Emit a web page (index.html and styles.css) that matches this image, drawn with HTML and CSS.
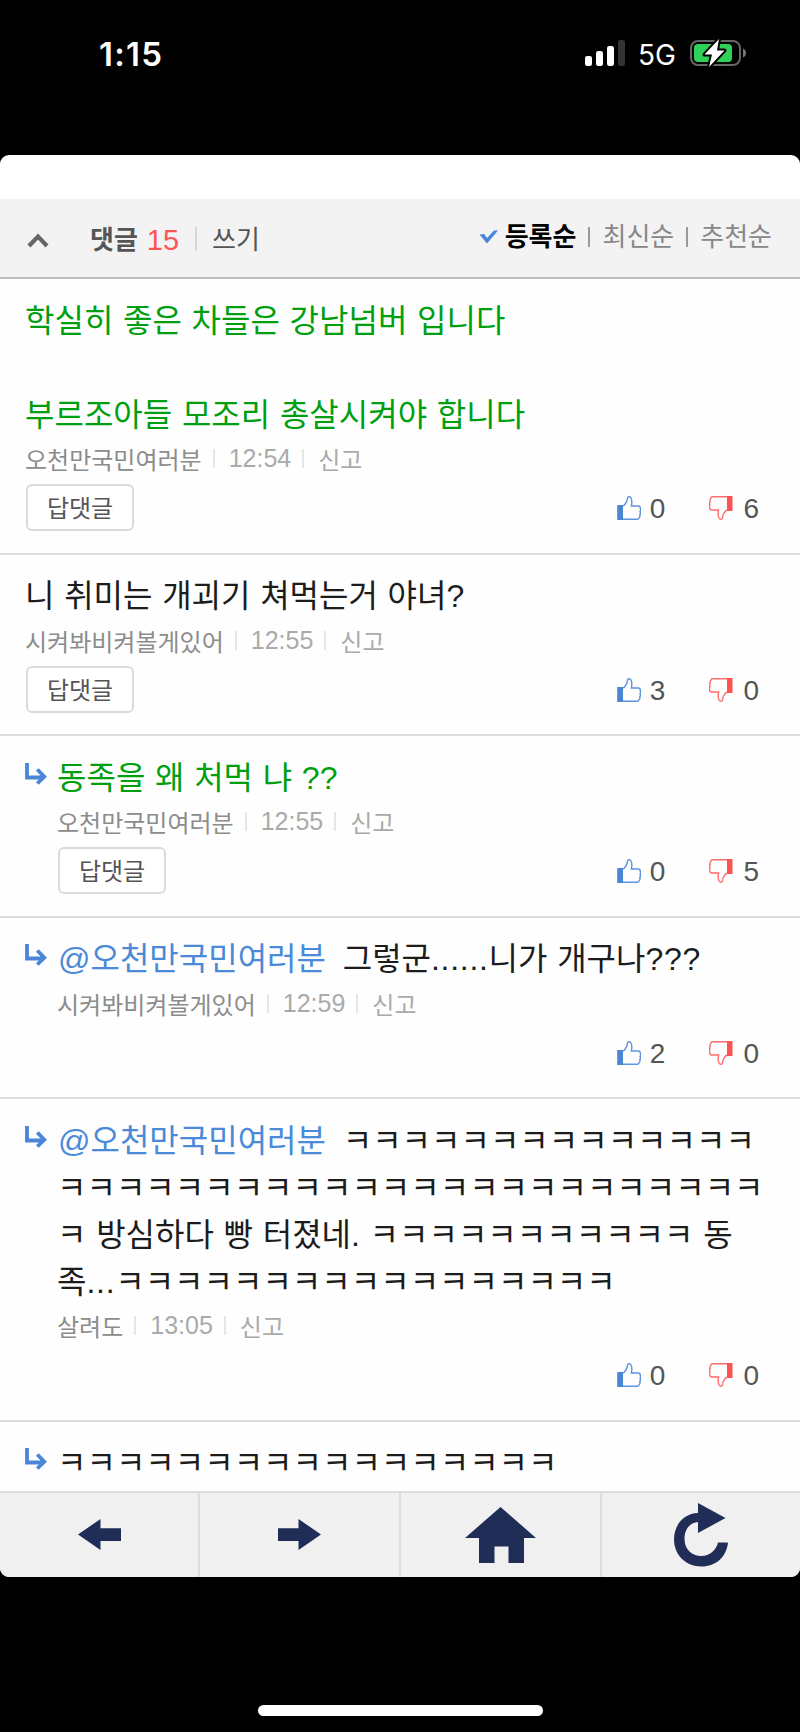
FILE: index.html
```html
<!DOCTYPE html>
<html lang="ko">
<head>
<meta charset="utf-8">
<title>댓글</title>
<link rel="stylesheet" href="styles.css">
</head>
<body>
<svg class="defs" width="0" height="0">
  <symbol id="up" viewBox="0 0 24 24"><path d="M5.5 23.2H20.5Q22 23.2 22 21.8 23.6 20.6 22.7 18.8 24 17.5 23 15.6 24 14 23.3 12.3 23.4 10.3 21.5 10H14.4C15 7 15 4 14 2 13 .3 10.8.3 10.5 2.2 10.4 5 9.6 6.6 7.5 9 7 9.7 6.5 9.8 5.5 9.8" fill="none" stroke="#5a94dc" stroke-width="1.4"/><path d="M.2 9H6V24H.2z" fill="#4a86d2"/></symbol>
  <symbol id="down" viewBox="0 0 24 24"><path d="M18.5.8H3.5Q2 .8 2 2.2.4 3.4 1.3 5.2 0 6.5 1 8.4 0 10 .7 11.700 .6 13.700 2.500 14H9.600C9 17 9 20 10 22 11 23.700 13.200 23.700 13.500 21.800 13.600 19 14.400 17.400 16.500 15 17 14.300 17.500 14.200 18.500 14.200" fill="none" stroke="#ff6c6c" stroke-width="1.4"/><path d="M18 0H23.500V15H18z" fill="#ff5252"/></symbol>
  <symbol id="reply" viewBox="0 0 22 22"><path d="M2 0V14.500H18M12.300 6.500 19.300 13.800 12.300 20.500" fill="none" stroke="#4a86d8" stroke-width="3.800"/></symbol>
</svg>
<div class="status">
  <span class="time">1:15</span>
  <svg class="signal" width="40" height="26" viewBox="0 0 40 26"><rect y="16" width="7" height="10" rx="2.200" fill="#fff"/><rect x="11" y="11" width="7" height="15" rx="2.200" fill="#fff"/><rect x="22" y="6" width="7" height="20" rx="2.200" fill="#fff"/><rect x="33" width="7" height="26" rx="2.200" fill="#333"/></svg>
  <span class="network">5G</span>
  <svg class="battery" width="57" height="30" viewBox="0 0 57 30"><rect x="1" y="3" width="49" height="24" rx="7" fill="none" stroke="#666" stroke-width="2"/><path d="M53 10.500Q56 12 56 15T53 19.500z" fill="#777"/><rect x="4" y="6" width="38" height="18" rx="4" fill="#30d158"/><path d="M29 1 14.500 16.500H22L19 29 34.500 12.500H27z" fill="#fff" stroke="#000" stroke-width="4" stroke-linejoin="round" paint-order="stroke"/></svg>
</div>
<main class="sheet">
  <header class="bar">
    <svg class="caret" width="22" height="16" viewBox="0 0 22 16"><path d="M2 13 11 3.500 20 13" fill="none" stroke="#666" stroke-width="4.200"/></svg>
    <span class="label">댓글</span><span class="count">15</span><i class="rule"></i><span class="write">쓰기</span>
    <nav class="sort">
      <svg width="20" height="14" viewBox="0 0 20 14"><path d="M.5 4.500 5 4 8 8 15 .5H19L8 13.500z" fill="#4a86d8"/></svg>
      <b>등록순</b><i></i><span>최신순</span><i></i><span>추천순</span>
    </nav>
  </header>
  <section class="list">
    <article class="item">
      <p class="text green">학실히 좋은 차들은 강남넘버 입니다<br><br>부르조아들 모조리 총살시켜야 합니다</p>
      <div class="meta"><span class="name">오천만국민여러분</span><i></i><span class="clock">12:54</span><i></i><span>신고</span></div>
      <div class="actions"><button class="answer">답댓글</button><div class="votes"><svg class="thumb"><use href="#up"/></svg><span>0</span><svg class="thumb no"><use href="#down"/></svg><span>6</span></div></div>
    </article>
    <article class="item">
      <p class="text">니 취미는 개괴기 쳐먹는거 야녀?</p>
      <div class="meta"><span class="name">시켜봐비켜볼게있어</span><i></i><span class="clock">12:55</span><i></i><span>신고</span></div>
      <div class="actions"><button class="answer">답댓글</button><div class="votes"><svg class="thumb"><use href="#up"/></svg><span>3</span><svg class="thumb no"><use href="#down"/></svg><span>0</span></div></div>
    </article>
    <article class="item nested">
      <svg class="reply"><use href="#reply"/></svg>
      <p class="text green">동족을 왜 처먹 냐 ??</p>
      <div class="meta"><span class="name">오천만국민여러분</span><i></i><span class="clock">12:55</span><i></i><span>신고</span></div>
      <div class="actions"><button class="answer">답댓글</button><div class="votes"><svg class="thumb"><use href="#up"/></svg><span>0</span><svg class="thumb no"><use href="#down"/></svg><span>5</span></div></div>
    </article>
    <article class="item nested">
      <svg class="reply"><use href="#reply"/></svg>
      <p class="text"><span class="mention">@오천만국민여러분</span> 그렇군<span class="dots">......</span>니가 개구나<span class="dots">???</span></p>
      <div class="meta"><span class="name">시켜봐비켜볼게있어</span><i></i><span class="clock">12:59</span><i></i><span>신고</span></div>
      <div class="actions"><div class="votes"><svg class="thumb"><use href="#up"/></svg><span>2</span><svg class="thumb no"><use href="#down"/></svg><span>0</span></div></div>
    </article>
    <article class="item nested">
      <svg class="reply"><use href="#reply"/></svg>
      <p class="text"><span class="mention">@오천만국민여러분</span> ㅋㅋㅋㅋㅋㅋㅋㅋㅋㅋㅋㅋㅋㅋ<br>ㅋㅋㅋㅋㅋㅋㅋㅋㅋㅋㅋㅋㅋㅋㅋㅋㅋㅋㅋㅋㅋㅋㅋㅋ<br>ㅋ 방심하다 빵 터졌네. ㅋㅋㅋㅋㅋㅋㅋㅋㅋㅋㅋ 동<br>족<span class="dots">...</span>ㅋㅋㅋㅋㅋㅋㅋㅋㅋㅋㅋㅋㅋㅋㅋㅋㅋ</p>
      <div class="meta"><span class="name">살려도</span><i></i><span class="clock">13:05</span><i></i><span>신고</span></div>
      <div class="actions"><div class="votes"><svg class="thumb"><use href="#up"/></svg><span>0</span><svg class="thumb no"><use href="#down"/></svg><span>0</span></div></div>
    </article>
    <article class="item nested">
      <svg class="reply"><use href="#reply"/></svg>
      <p class="text">ㅋㅋㅋㅋㅋㅋㅋㅋㅋㅋㅋㅋㅋㅋㅋㅋㅋ</p>
    </article>
  </section>
  <footer class="tools">
    <a><svg width="43" height="31" viewBox="0 0 43 31"><path d="M0 15.500 22.500 0V9.300H43V22H22.500V31z"/></svg></a>
    <a><svg width="43" height="31" viewBox="0 0 43 31"><path d="M43 15.500 20.500 0V9.300H0V22H20.500V31z"/></svg></a>
    <a><svg width="71" height="56" viewBox="0 0 71 56"><path d="M35.500 0 71 31H59V56H43.500V39.500H29.500V56H14V31H0z"/></svg></a>
    <a><svg width="54" height="64" viewBox="0 0 54 64"><path d="M24 0 51.500 15 24 30V19C15 20 10.500 27 10.500 36 10.500 46 17.500 53 27.500 53 35.500 53 42 47.500 44 39.500H54C52.500 54 42 63.500 27.500 63.500 11.500 63.500 0 51.500 0 36.500 0 21.500 10 10.500 24 10z"/></svg></a>
  </footer>
</main>
<div class="home"></div>
</body>
</html>
```

FILE: styles.css
```css
* { box-sizing: border-box; }
body {
  margin: 0;
  width: 800px;
  height: 1732px;
  background: #000;
  color: #1c1c1c;
  font-family: "Liberation Sans", "Noto Sans CJK KR", sans-serif;
  display: flex;
  flex-direction: column;
  align-items: center;
  overflow: hidden;
}
svg { display: block; flex: none; }
i { display: block; flex: none; width: 2px; }
.defs { position: absolute; }

.status {
  width: 800px;
  height: 154.500px;
  flex: none;
  padding: 33px 53px 0 99px;
  display: flex;
  align-items: flex-start;
  color: #fff;
  font-family: Inter, sans-serif;
}
.time { font-size: 33px; line-height: 43px; font-weight: 600; letter-spacing: 1.300px; }
.signal { margin: 7px 0 0 auto; }
.network { width: 65px; padding-left: 13px; font-size: 28px; line-height: 44px; font-weight: 400; }
.battery { margin-top: 5px; width: 57px; }

.sheet {
  width: 800px;
  height: 1422.500px;
  flex: none;
  background: #fff;
  border-radius: 9px;
  overflow: hidden;
  display: flex;
  flex-direction: column;
}
.bar {
  flex: none;
  margin-top: 44.500px;
  height: 80px;
  background: #f3f3f3;
  border-bottom: 2px solid #bdbdbd;
  padding: 4px 28px 0 27px;
  display: flex;
  align-items: center;
  font-size: 26px;
  line-height: 40px;
  color: #555;
}
.caret { margin-top: 1px; }
.label { margin-left: 41px; font-weight: 700; }
.count { margin-left: 9px; font-size: 29px; color: #ff5555; }
.rule { height: 24px; margin: -3px 15px 0 16px; background: #d6d6d6; }
.sort { margin-left: auto; margin-top: -6px; display: flex; align-items: center; color: #888; }
.sort b { margin-left: 6px; color: #000; }
.sort i { height: 20px; margin: 0 12px; background: #999; }

.list { flex: 1; min-height: 0; overflow: hidden; background: #fefefe; }
.item {
  position: relative;
  padding: 18.500px 0 0 26px;
  border-bottom: 2px solid #dcdcdc;
}
.item:last-child { border-bottom: 0; }
.nested { padding-left: 58px; }
.reply { position: absolute; left: 25px; top: 26.500px; width: 22px; height: 22px; }
.text { margin: 0 0 0 -1px; font-size: 32px; line-height: 47px; white-space: nowrap; word-spacing: .8px; }
.green { color: #009f10; }
.mention { color: #4a8ad8; margin: 0 7px 0 1px; }
.dots { letter-spacing: .7px; }
.meta {
  height: 46px;
  margin: -3px 0 0 -1px;
  display: flex;
  align-items: center;
  font-size: 24px;
  color: #aaa;
}
.meta i { height: 19px; margin: 0 14px 0 11px; background: #e6e6e6; }
.name { color: #8c8c8c; }
.clock { font-size: 25px; }
.actions { padding-top: 2.500px; height: 71px; display: flex; align-items: flex-start; }
.answer {
  width: 108px;
  height: 47px;
  padding: 0 0 2px;
  border: 2px solid #dadada;
  border-radius: 6px;
  background: #fff;
  color: #555;
  font: inherit;
  font-size: 24px;
}
.votes {
  margin: 8px 41px 0 auto;
  height: 34px;
  display: flex;
  align-items: center;
  font-size: 28px;
  color: #555;
}
.thumb { width: 24px; height: 24px; margin: -2px 9px 0 0; }
.no { margin-left: 44px; margin-right: 10px; }

.tools {
  flex: none;
  height: 86.500px;
  background: #f0f0f0;
  border-top: 2px solid #dedede;
  display: grid;
  grid-template-columns: 200px 201px 201px 197px;
}
.tools a { display: flex; align-items: center; justify-content: center; border-right: 2px solid #dedede; }
.tools a:last-child { border-right: 0; }
.tools path { fill: #202d56; }

.home { margin-top: 128px; width: 285px; height: 10.500px; border-radius: 6px; background: #fff; flex: none; }
```
